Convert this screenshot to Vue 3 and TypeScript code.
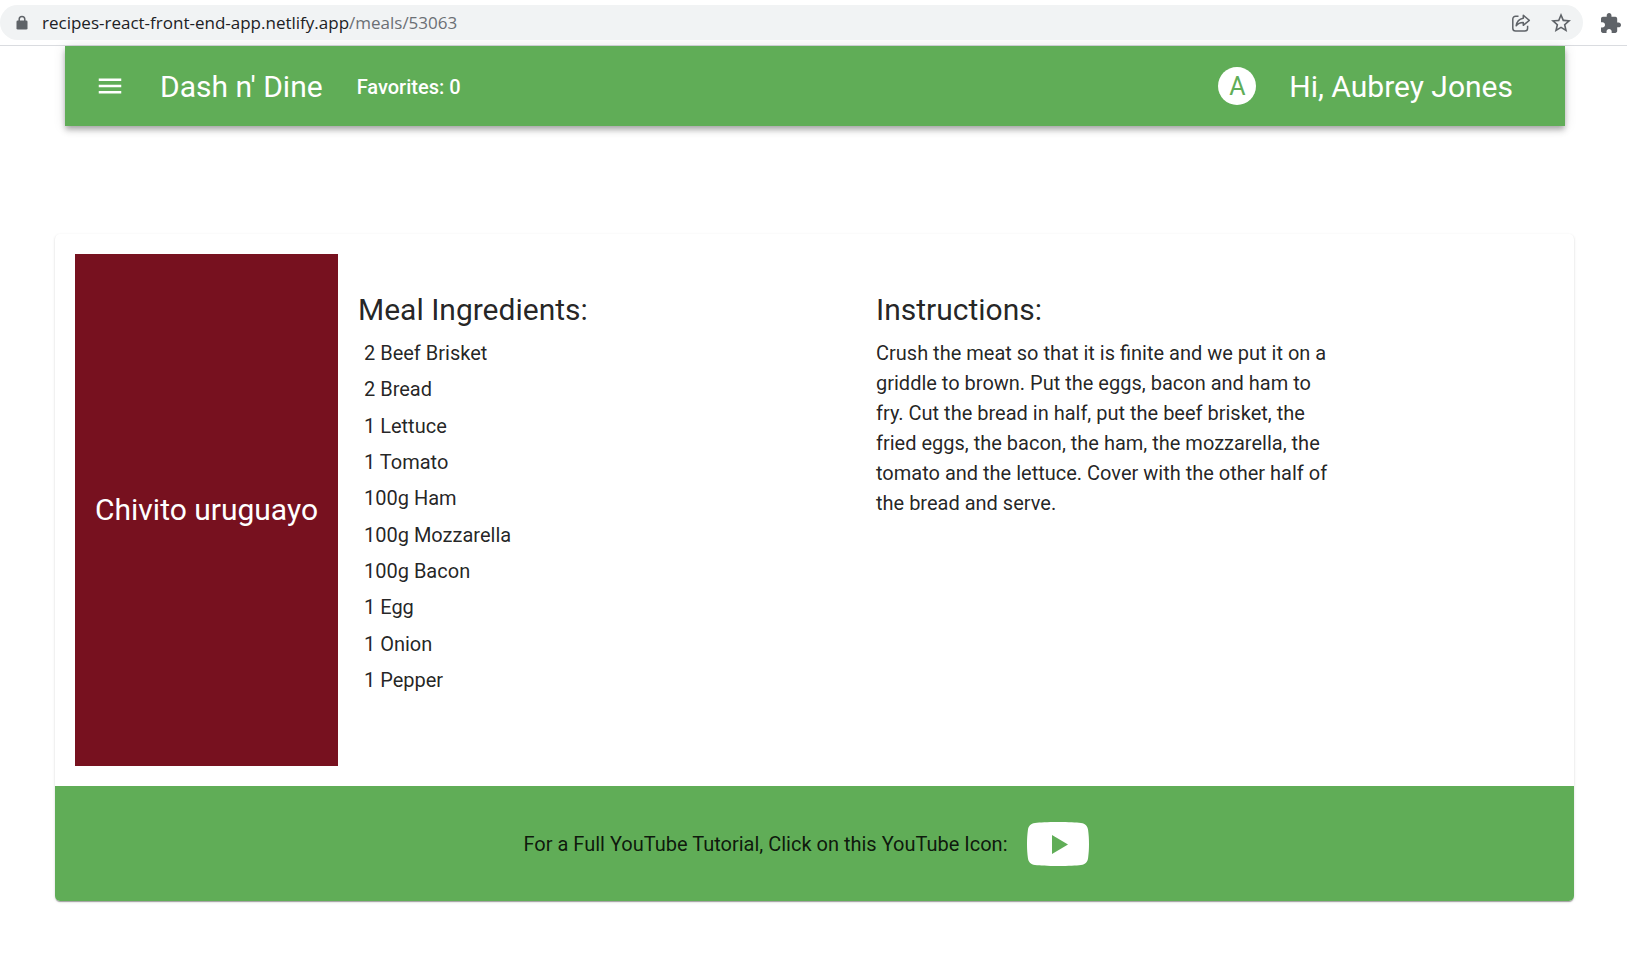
<script setup lang="ts">
interface Meal {
  name: string
  ingredients: string[]
  instructions: string
}

const user = { name: 'Aubrey Jones', initial: 'A' }
const favorites = 0

const meal: Meal = {
  name: 'Chivito uruguayo',
  ingredients: [
    '2 Beef Brisket',
    '2 Bread',
    '1 Lettuce',
    '1 Tomato',
    '100g Ham',
    '100g Mozzarella',
    '100g Bacon',
    '1 Egg',
    '1 Onion',
    '1 Pepper',
  ],
  instructions:
    'Crush the meat so that it is finite and we put it on a griddle to brown. Put the eggs, bacon and ham to fry. Cut the bread in half, put the beef brisket, the fried eggs, the bacon, the ham, the mozzarella, the tomato and the lettuce. Cover with the other half of the bread and serve.',
}
</script>

<template>
  <div class="browser-bar">
    <div class="omnibox">
      <svg class="lock" viewBox="0 0 12 16" aria-hidden="true">
        <path d="M3.2 6.5V4.2a2.8 2.8 0 0 1 5.6 0v2.3" fill="none" stroke="#5f6368" stroke-width="1.5" />
        <rect x="0.5" y="5.5" width="11" height="9" rx="1.3" fill="#5f6368" />
      </svg>
      <div class="url">recipes-react-front-end-app.netlify.app<span class="path">/meals/53063</span></div>
      <button class="bar-button" type="button" aria-label="Share this page">
        <svg viewBox="0 0 20 20" aria-hidden="true" fill="none" stroke="#5f6368" stroke-width="1.5" stroke-linejoin="round">
          <path d="M7.5 3.2H4.6A2.8 2.8 0 0 0 1.8 6v9.2A2.8 2.8 0 0 0 4.6 18h9.2a2.8 2.8 0 0 0 2.8-2.800v-2.400" />
          <path d="M12.300 2.300 18.300 7.300 12.300 12.300V9.400C9.300 9.300 7 10.300 5.200 12.800 5.700 9.200 7.800 5.900 12.300 5.200Z" />
        </svg>
      </button>
      <button class="bar-button" type="button" aria-label="Bookmark this page">
        <svg viewBox="2 2 20 20" aria-hidden="true" fill="#5f6368">
          <path d="M22 9.240l-7.190-.62L12 2 9.190 8.630 2 9.240l5.460 4.730L5.820 21 12 17.270 18.180 21l-1.630-7.030L22 9.240zM12 15.400l-3.760 2.270 1-4.280-3.320-2.880 4.380-.38L12 6.100l1.710 4.040 4.380.38-3.320 2.880 1 4.280L12 15.400z" />
        </svg>
      </button>
    </div>
    <button class="bar-button" type="button" aria-label="Extensions">
      <svg viewBox="2 1 21 21" aria-hidden="true" fill="#5f6368">
        <path d="M20.500 11H19V7c0-1.100-.9-2-2-2h-4V3.500C13 2.120 11.880 1 10.500 1S8 2.120 8 3.500V5H4c-1.100 0-1.990.9-1.990 2v3.800H3.500c1.490 0 2.700 1.210 2.700 2.700s-1.210 2.700-2.700 2.700H2V20c0 1.100.9 2 2 2h3.800v-1.500c0-1.490 1.210-2.700 2.700-2.700 1.490 0 2.700 1.210 2.700 2.700V22H17c1.100 0 2-.9 2-2v-4h1.500c1.380 0 2.500-1.120 2.500-2.500S21.880 11 20.500 11z" />
      </svg>
    </button>
  </div>

  <header class="app-bar">
    <button class="menu-button" type="button" aria-label="Open menu">
      <svg viewBox="0 0 24 24" aria-hidden="true" fill="currentColor">
        <path d="M3 18h18v-2H3v2zm0-5h18v-2H3v2zm0-7v2h18V6H3z" />
      </svg>
    </button>
    <a class="brand" href="#">Dash n' Dine</a>
    <a class="favorites" href="#">Favorites: {{ favorites }}</a>
    <div class="avatar">{{ user.initial }}</div>
    <div class="greeting">Hi, {{ user.name }}</div>
  </header>

  <main class="card">
    <div class="content">
      <div class="meal-name"><h1>{{ meal.name }}</h1></div>
      <section class="column">
        <h2>Meal Ingredients:</h2>
        <ul>
          <li v-for="item in meal.ingredients" :key="item">{{ item }}</li>
        </ul>
      </section>
      <section class="column">
        <h2>Instructions:</h2>
        <p>{{ meal.instructions }}</p>
      </section>
    </div>
    <footer class="tutorial">
      <span>For a Full YouTube Tutorial, Click on this YouTube Icon:</span>
      <a href="#" aria-label="YouTube tutorial">
        <svg viewBox="0 0 62 44" aria-hidden="true" fill="#fff" fill-rule="evenodd">
          <path d="M31 0C42 0 49 .4 54 1c4.500.7 6.500 3 7.100 7 .6 4.500.9 9 .9 14s-.3 9.500-.9 14c-.6 4-2.600 6.300-7.100 7-5 .6-12 1-23 1S13 43.600 8 43c-4.500-.7-6.500-3-7.100-7C.3 31.500 0 27 0 22s.3-9.500.9-14C1.500 4 3.500 1.700 8 1 13 .4 20 0 31 0zM25 13v19l16-9.500z" />
        </svg>
      </a>
    </footer>
  </main>
</template>

<style>
body {
  margin: 0;
  background: #fff;
}
</style>

<style scoped>
.browser-bar {
  display: flex;
  align-items: center;
  gap: 18px;
  height: 45px;
  padding-right: 6px;
  border-bottom: 1px solid #dadce0;
  background: #fff;
}

.omnibox {
  display: flex;
  flex: 1;
  align-items: center;
  gap: 20px;
  height: 35px;
  padding: 0 12px 0 16px;
  border-radius: 18px;
  background: #f1f3f4;
}

.lock {
  width: 12px;
  height: 16px;
}

.url {
  flex: 1;
  margin-left: -6px;
  color: #202124;
  font: 17px/24px "Open Sans", "Noto Sans", sans-serif;
}

.path {
  color: #6b6f74;
}

button {
  padding: 0;
  border: 0;
  background: none;
  color: inherit;
  cursor: pointer;
}

.bar-button {
  width: 20px;
  height: 20px;
}

svg {
  display: block;
}

.app-bar,
.card {
  font-family: Roboto, "Liberation Sans", sans-serif;
}

.app-bar {
  display: flex;
  align-items: center;
  box-sizing: border-box;
  height: 80px;
  margin: 0 62px 0 65px;
  padding: 0 52px 0 30px;
  background: #60ad57;
  color: #fff;
  box-shadow: 0 3px 5px -1px rgba(0, 0, 0, 0.2), 0 5px 6px rgba(0, 0, 0, 0.14), 0 1px 12px rgba(0, 0, 0, 0.12);
}

.menu-button {
  width: 30px;
  height: 30px;
}

a {
  color: inherit;
  text-decoration: none;
}

.brand,
.greeting,
.favorites {
  padding-top: 2px;
}

.brand,
.greeting {
  font-size: 30px;
  line-height: 40px;
}

.brand {
  margin-left: 35px;
}

.favorites {
  margin-left: 34px;
  font-size: 20px;
  font-weight: 500;
  line-height: 30px;
}

.avatar {
  width: 38px;
  height: 38px;
  margin: 0 33px 0 auto;
  border-radius: 50%;
  background: #fff;
  color: #60ad57;
  font-size: 25px;
  line-height: 40px;
  text-align: center;
}

.card {
  margin: 108px 53px 40px 55px;
  overflow: hidden;
  border-radius: 5px;
  background: #fff;
  color: rgba(0, 0, 0, 0.87);
  font-size: 20px;
  line-height: 30px;
  box-shadow: 0 2px 1px -1px rgba(0, 0, 0, 0.2), 0 1px 1px rgba(0, 0, 0, 0.14), 0 1px 3px rgba(0, 0, 0, 0.12);
}

.content {
  display: grid;
  grid-template-columns: 263px minmax(0, 518fr) minmax(0, 698fr);
  padding: 20px;
}

.meal-name {
  display: flex;
  align-items: center;
  justify-content: center;
  min-height: 512px;
  background: #77111f;
  color: #fff;
}

h1,
h2 {
  margin: 0;
  font-size: 30px;
  font-weight: 400;
  line-height: 40px;
}

.column {
  padding: 36px 20px 0;
}

ul {
  display: grid;
  grid-auto-rows: 1fr;
  align-items: center;
  height: 363px;
  margin: 5px 0 0;
  padding: 0 0 0 6px;
  list-style: none;
}

p {
  max-width: 456px;
  margin: 8px 0 0;
}

.tutorial {
  display: flex;
  align-items: center;
  justify-content: center;
  gap: 20px;
  height: 115px;
  padding-right: 16px;
  background: #60ad57;
}

.tutorial svg {
  width: 62px;
  height: 44px;
}
</style>
